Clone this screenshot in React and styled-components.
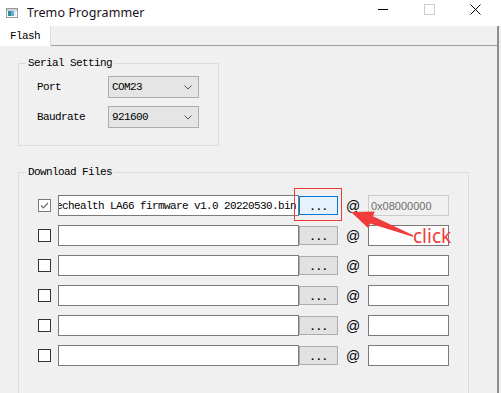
import React from 'react';
import styled, { createGlobalStyle } from 'styled-components';

const GlobalStyle = createGlobalStyle`
    html, body {
        margin: 0;
        padding: 0;
        background: #f0f0f0;
    }
`;

const MONO = `"Liberation Mono", "DejaVu Sans Mono", monospace`;

const WINDOW = styled.div`
    width: 501px;
    height: 393px;
    overflow: hidden;
    background: #f0f0f0;
    display: flex;
    flex-direction: column;
    font-family: ${MONO};
    font-size: 11px;
    letter-spacing: -0.6px;
    color: #000;
`;

const TITLE_BAR = styled.div`
    height: 26px;
    flex: none;
    background: #fff;
    display: flex;
    align-items: center;
    padding-left: 6px;

    .title {
        font-family: "Noto Sans", "Liberation Sans", sans-serif;
        font-size: 12.5px;
        letter-spacing: 0.1px;
        color: #1b1020;
        margin-left: 9px;
        margin-top: -2px;
    }
`;

const CONTROLS = styled.div`
    margin-left: auto;
    display: flex;
    padding-right: 3px;
    height: 100%;
`;

const CONTROL_BTN = styled.div`
    width: 46px;
    height: 100%;
    display: flex;
    align-items: center;
    justify-content: center;
    margin-top: -4px;
`;

const BODY = styled.div`
    flex: 1;
    width: 499px;
    box-sizing: border-box;
    border-right: 2px solid #8e8e8e;
    display: flex;
    flex-direction: column;
`;

const TAB_BAR = styled.div`
    height: 20px;
    flex: none;
    display: flex;
`;

const TAB = styled.div`
    width: 51px;
    box-sizing: border-box;
    background: #fff;
    border-right: 1px solid #d9d9d9;
    padding-left: 10px;
    line-height: 20px;
`;

const TAB_FILL = styled.div`
    flex: 1;
    border-bottom: 1px solid #a0a0a0;
`;

const PANE = styled.div`
    flex: 1;
    display: flex;
    flex-direction: column;
    padding: 17px 0 0 18px;
`;

const GROUP_BOX = styled.div`
    width: ${p => p.$width}px;
    margin-top: ${p => p.$mt || 0}px;
    box-sizing: border-box;
    border: 1px solid #dcdcdc;
    padding-bottom: ${p => p.$pb || 0}px;
    flex: none;
`;

const CAPTION = styled.div`
    width: fit-content;
    height: 14px;
    line-height: 14px;
    margin: -8px 0 0 7px;
    padding: 0 2px;
    background: #f0f0f0;
`;

const FORM_ROWS = styled.div`
    display: flex;
    flex-direction: column;
    gap: ${p => p.$gap}px;
    padding: ${p => p.$pt}px 0 0 ${p => p.$pl}px;
`;

const FORM_ROW = styled.div`
    display: flex;
    align-items: center;
    height: ${p => p.$h}px;
    position: relative;
`;

const LABEL = styled.div`
    width: 71px;
`;

const COMBO = styled.div`
    width: 91px;
    height: 22px;
    box-sizing: border-box;
    border: 1px solid #adadad;
    background: #e5e5e5;
    display: flex;
    align-items: center;
    padding: 0 6px 0 3px;

    svg {
        margin-left: auto;
    }
`;

const CHECK = styled.div`
    width: 13px;
    height: 13px;
    box-sizing: border-box;
    border: 1px solid ${p => p.$checked ? '#7a7a7a' : '#333'};
    background: #fff;
    margin-right: 7px;
    flex: none;
    display: flex;
`;

const FILE_BOX = styled.div`
    width: 241px;
    height: 21px;
    box-sizing: border-box;
    border: 1px solid #7a7a7a;
    background: #fff;
    display: flex;
    justify-content: flex-end;
    align-items: center;
    overflow: hidden;
    white-space: nowrap;
    padding: 0 2px;
    flex: none;
`;

const BROWSE = styled.div`
    width: 39px;
    height: 19px;
    box-sizing: border-box;
    border: 1px solid ${p => p.$focused ? '#0078d7' : '#adadad'};
    background: ${p => p.$focused ? '#e5f1fb' : '#e1e1e1'};
    display: flex;
    align-items: center;
    justify-content: center;
    font-weight: bold;
    font-size: 11px;
    letter-spacing: -0.4px;
    padding-top: 2px;
    flex: none;
`;

const AT = styled.div`
    width: 30px;
    text-align: center;
    font-family: "Liberation Sans", Arial, sans-serif;
    font-size: 14px;
    letter-spacing: 0;
    flex: none;
`;

const ADDR = styled.div`
    width: 81px;
    height: 21px;
    box-sizing: border-box;
    border: 1px solid ${p => p.$disabled ? '#cccccc' : '#7a7a7a'};
    background: ${p => p.$disabled ? '#f0f0f0' : '#fff'};
    color: #6d6d6d;
    font-family: "Liberation Sans", Arial, sans-serif;
    font-size: 11px;
    letter-spacing: 0;
    display: flex;
    align-items: center;
    padding-left: 2px;
    flex: none;
`;

const RED_BOX = styled.div`
    position: absolute;
    z-index: 2;
    left: 256px;
    top: -7px;
    width: 48px;
    height: 33px;
    box-sizing: border-box;
    border: 1px solid #f03a3a;
    pointer-events: none;
`;

const ARROW = styled.svg`
    position: absolute;
    z-index: 2;
    left: 307px;
    top: 4px;
    pointer-events: none;
`;

const CLICK = styled.div`
    position: absolute;
    z-index: 2;
    left: 375px;
    top: 32px;
    font-family: "Noto Sans", "Liberation Sans", sans-serif;
    font-size: 19px;
    line-height: 19px;
    letter-spacing: 0;
    color: #f03a3a;
`;

const AppIcon = () => (
    <svg width="12" height="10" viewBox="0 0 12 10">
        <rect x="0.5" y="0.5" width="11" height="9" fill="#fff" stroke="#9a9a9a" />
        <rect x="1" y="1" width="10" height="2" fill="#c9d3dc" />
        <rect x="2" y="3" width="3" height="5" fill="#2f8f86" />
        <rect x="5" y="3" width="3" height="5" fill="#6aa6d8" />
        <rect x="8" y="3" width="2" height="5" fill="#e6eef5" />
    </svg>
);

const Chevron = () => (
    <svg width="8" height="5" viewBox="0 0 8 5">
        <path d="M0.5 0.5 L4 4 L7.5 0.5" fill="none" stroke="#555" strokeWidth="1" />
    </svg>
);

const files = [
    { checked: true, name: 'Dragino_techealth LA66 firmware v1.0 20220530.bin', addr: '0x08000000' },
    { checked: false, name: '', addr: '' },
    { checked: false, name: '', addr: '' },
    { checked: false, name: '', addr: '' },
    { checked: false, name: '', addr: '' },
    { checked: false, name: '', addr: '' },
];

const App = () => {
    return (
        <WINDOW>
            <GlobalStyle />
            <TITLE_BAR>
                <AppIcon />
                <span className="title">Tremo Programmer</span>
                <CONTROLS>
                    <CONTROL_BTN>
                        <svg width="10" height="10" viewBox="0 0 10 10">
                            <path d="M0 5.5 H10" stroke="#000" strokeWidth="1" />
                        </svg>
                    </CONTROL_BTN>
                    <CONTROL_BTN>
                        <svg width="11" height="11" viewBox="0 0 11 11">
                            <rect x="0.5" y="0.5" width="10" height="10" fill="none" stroke="#cccccc" />
                        </svg>
                    </CONTROL_BTN>
                    <CONTROL_BTN>
                        <svg width="11" height="11" viewBox="0 0 11 11">
                            <path d="M0.5 0.5 L10.5 10.5 M10.5 0.5 L0.5 10.5" stroke="#000" strokeWidth="1" />
                        </svg>
                    </CONTROL_BTN>
                </CONTROLS>
            </TITLE_BAR>
            <BODY>
                <TAB_BAR>
                    <TAB>Flash</TAB>
                    <TAB_FILL />
                </TAB_BAR>
                <PANE>
                    <GROUP_BOX $width={201} $pb={17}>
                        <CAPTION>Serial Setting</CAPTION>
                        <FORM_ROWS $gap={8} $pt={6} $pl={18}>
                            <FORM_ROW $h={22}>
                                <LABEL>Port</LABEL>
                                <COMBO>COM23<Chevron /></COMBO>
                            </FORM_ROW>
                            <FORM_ROW $h={22}>
                                <LABEL>Baudrate</LABEL>
                                <COMBO>921600<Chevron /></COMBO>
                            </FORM_ROW>
                        </FORM_ROWS>
                    </GROUP_BOX>

                    <GROUP_BOX $width={451} $mt={26} $pb={30}>
                        <CAPTION>Download Files</CAPTION>
                        <FORM_ROWS $gap={9} $pt={16} $pl={19}>
                            {files.map((f, i) => (
                                <FORM_ROW $h={21} key={i}>
                                    <CHECK $checked={f.checked}>
                                        {f.checked && (
                                            <svg width="11" height="11" viewBox="0 0 11 11">
                                                <path d="M2 5.5 L4.3 7.8 L9 3" fill="none" stroke="#6a6a6a" strokeWidth="1.2" />
                                            </svg>
                                        )}
                                    </CHECK>
                                    <FILE_BOX>{f.name}</FILE_BOX>
                                    <BROWSE $focused={i === 0}>...</BROWSE>
                                    <AT>@</AT>
                                    <ADDR $disabled={i === 0}>{f.addr}</ADDR>
                                    {i === 0 && (
                                        <>
                                            <RED_BOX />
                                            <ARROW width="110" height="50" viewBox="0 0 110 50">
                                                <polygon
                                                    points="6,13 29.7,12.5 28,17.2 68.2,36.3 67.8,37.7 25,24.6 23.3,29.3"
                                                    fill="#f23b3b"
                                                />
                                            </ARROW>
                                            <CLICK>click</CLICK>
                                        </>
                                    )}
                                </FORM_ROW>
                            ))}
                        </FORM_ROWS>
                    </GROUP_BOX>
                </PANE>
            </BODY>
        </WINDOW>
    );
};

export default App;
